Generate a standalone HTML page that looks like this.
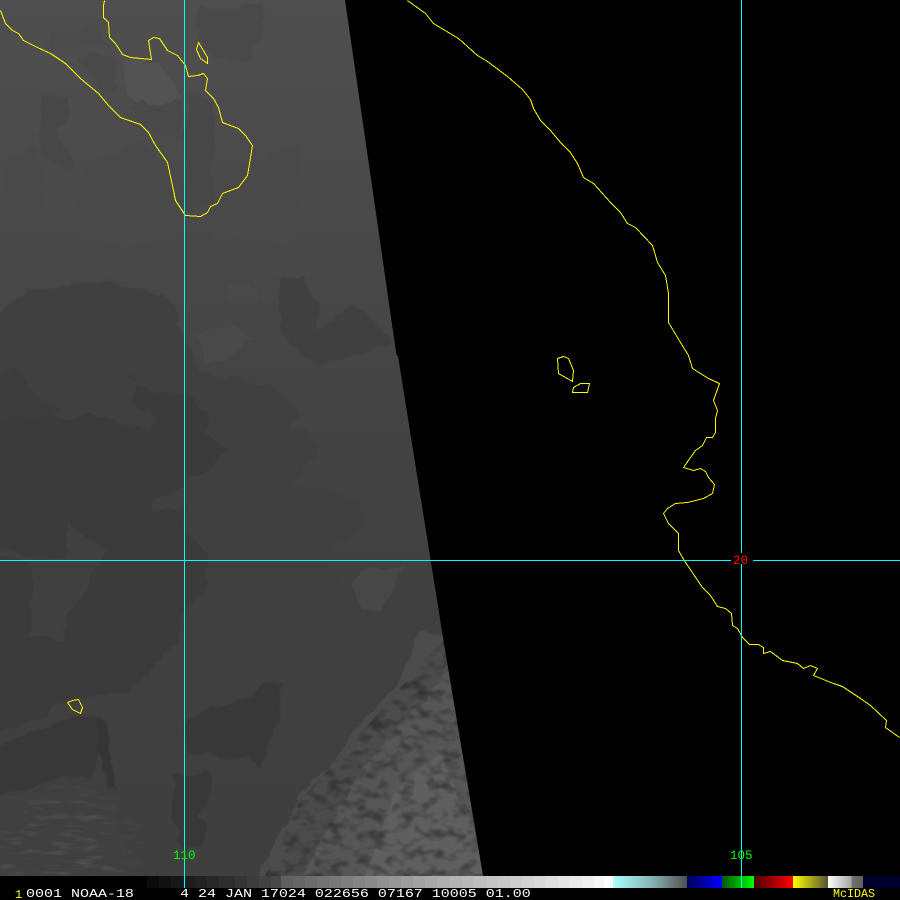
<!DOCTYPE html>
<html lang="en">
<head>
<meta charset="utf-8">
<title>McIDAS NOAA-18</title>
<style>
html,body{margin:0;padding:0;background:#000;width:900px;height:900px;overflow:hidden}
svg{display:block}
text{font-family:"Liberation Mono",monospace}
</style>
</head>
<body>
<svg width="900" height="900" viewBox="0 0 900 900" xmlns="http://www.w3.org/2000/svg">
<defs>
<linearGradient id="base" x1="0" y1="0" x2="0" y2="876" gradientUnits="userSpaceOnUse">
<stop offset="0" stop-color="#4f4f4f"/>
<stop offset=".25" stop-color="#494949"/>
<stop offset=".45" stop-color="#444444"/>
<stop offset=".72" stop-color="#404040"/>
<stop offset="1" stop-color="#3f3f3f"/>
</linearGradient>
<clipPath id="swath"><polygon points="0,0 345,0 377,220 396,352 397,356 398,356 445,650 483,876 0,876"/></clipPath>
<clipPath id="cloudclip"><polygon points="265,876 300,800 350,745 420,665 445,640 490,876"/></clipPath>
<filter id="wob" x="-5%" y="-5%" width="110%" height="110%">
<feTurbulence type="fractalNoise" baseFrequency=".035" numOctaves="3" seed="11" result="t"/>
<feDisplacementMap in="SourceGraphic" in2="t" scale="16" xChannelSelector="R" yChannelSelector="G"/>
<feGaussianBlur stdDeviation=".5"/>
</filter>
<filter id="noise" x="0" y="0" width="100%" height="100%" color-interpolation-filters="sRGB">
<feTurbulence type="fractalNoise" baseFrequency=".07 .1" numOctaves="2" seed="7"/>
<feColorMatrix values="0 0 0 0 .12  0 0 0 0 .12  0 0 0 0 .12  3 0 0 0 -1.35"/>
</filter>
<filter id="noiseL" x="0" y="0" width="100%" height="100%">
<feTurbulence type="fractalNoise" baseFrequency=".04 .2" numOctaves="2" seed="3"/>
<feColorMatrix values="0 0 0 0 1  0 0 0 0 1  0 0 0 0 1  2 0 0 0 -1"/>
</filter>
<radialGradient id="fade" gradientUnits="userSpaceOnUse" cx="60" cy="860" r="95"><stop offset=".4" stop-color="#fff"/><stop offset="1" stop-color="#000"/></radialGradient>
<mask id="fadeM" maskUnits="userSpaceOnUse" x="0" y="760" width="170" height="116"><rect x="0" y="760" width="170" height="116" fill="url(#fade)"/></mask>
<linearGradient id="cy" x1="0" x2="1" y1="0" y2="0"><stop offset="0" stop-color="#aaffff"/><stop offset=".5" stop-color="#88b8b8"/><stop offset="1" stop-color="#505050"/></linearGradient>
<linearGradient id="bl" x1="0" x2="1" y1="0" y2="0"><stop offset="0" stop-color="#00005a"/><stop offset="1" stop-color="#0000ff"/></linearGradient>
<linearGradient id="gr" x1="0" x2="1" y1="0" y2="0"><stop offset="0" stop-color="#005a00"/><stop offset="1" stop-color="#00ff00"/></linearGradient>
<linearGradient id="rd" x1="0" x2="1" y1="0" y2="0"><stop offset="0" stop-color="#4a0000"/><stop offset="1" stop-color="#ff0000"/></linearGradient>
<linearGradient id="ye" x1="0" x2="1" y1="0" y2="0"><stop offset="0" stop-color="#ffff00"/><stop offset="1" stop-color="#555533"/></linearGradient>
<linearGradient id="wh" x1="0" x2="1" y1="0" y2="0"><stop offset="0" stop-color="#ffffff"/><stop offset=".65" stop-color="#a8a8a8"/><stop offset=".7" stop-color="#707070"/><stop offset="1" stop-color="#606060"/></linearGradient>
</defs>

<rect width="900" height="900" fill="#000"/>

<g clip-path="url(#swath)">
<rect width="500" height="876" fill="url(#base)"/>

<g filter="url(#wob)">
<!-- top region (zoom coords 3x) -->
<g transform="scale(.3333)">
<path d="M600,30 L780,10 L790,120 L730,190 L640,170 L590,110Z" fill="#494949"/>
<path d="M130,290 L200,285 L205,330 L165,400 L225,480 L220,500 L130,470 L120,370Z" fill="#474747"/>
<path d="M15,480 L110,450 L130,520 L120,620 L30,600Z" fill="#494949"/>
<path d="M560,290 L640,300 L640,610 L560,620Z" fill="#474747"/>
<path d="M390,320 L500,260 L540,300 L545,410 L480,390 L430,370Z" fill="#484848"/>
<path d="M240,170 L340,170 L350,280 L290,260Z" fill="#4a4a4a"/>
<path d="M160,100 L310,70 L320,130 L150,145Z" fill="#4c4c4c"/>
<path d="M370,180 L490,180 L550,310 L440,320 L380,280Z" fill="#525252"/>
<path d="M240,520 L430,425 L520,560 L530,720 L220,720Z" fill="#494949"/>
<path d="M740,490 L900,430 L900,720 L640,720 L650,600Z" fill="#494949"/>
</g>

<!-- middle region (zoom 3x, offset y=220) -->
<g transform="translate(0,220) scale(.3333)">
<path d="M-60,330 L80,210 L200,205 L240,190 L400,190 L520,250 L553,360 L600,460 L830,500 L900,580 L860,630 L920,620 L950,710 L870,790 L1060,840 L1080,900 L990,1000 L1010,1110 L1060,1290 L-60,1290Z" fill="#414141"/>
<path d="M830,180 L910,180 L950,250 L960,320 L1060,260 L1100,290 L1180,370 L1070,390 L950,430 L890,400 L850,340Z" fill="#414141"/>
<path d="M-60,590 L100,570 L200,600 L270,570 L400,610 L450,640 L480,610 L470,590 L400,540 L400,470 L375,470 L430,510 L553,530 L620,570 L620,640 L690,680 L640,730 L553,780 L553,810 L450,850 L450,890 L553,860 L553,930 L620,1000 L625,1100 L553,1170 L530,1280 L200,1290 L190,1230 L280,1050 L330,990 L260,950 L205,910 L200,1010 L100,1010 L-60,980Z" fill="#3b3b3b"/>
<path d="M-60,480 L60,450 L110,530 L190,570 L100,600 L-60,600Z" fill="#3e3e3e"/>
<path d="M-60,1020 L90,1020 L95,1290 L-60,1290Z" fill="#3b3b3b"/>
<path d="M1040,1100 L1100,1040 L1210,1040 L1150,1170 L1090,1170Z" fill="#474747"/>
<path d="M680,190 L760,170 L770,260 L690,250Z" fill="#494949"/>
<path d="M590,340 L700,320 L760,350 L720,400 L620,440Z" fill="#484848"/>
</g>

<!-- lower region (zoom 3x, offset y=640) -->
<g transform="translate(0,640) scale(.3333)">
<path d="M-60,0 L520,0 L380,170 L300,160 L160,190 L120,230 L-60,300Z" fill="#3a3a3a"/>
<path d="M-60,330 L200,240 L280,230 L330,240 L280,400 L-60,480Z" fill="#393939"/>
<path d="M285,240 L315,240 L345,440 L325,430 L285,310Z" fill="#343434"/>
<path d="M-60,480 L300,430 L350,500 L380,720 L-60,720Z" fill="#404040"/>
<path d="M550,240 L760,170 L790,120 L845,130 L840,210 L810,300 L790,390 L740,340 L690,350 L550,340Z" fill="#383838"/>
<path d="M520,410 L620,400 L635,460 L600,530 L630,560 L600,620 L530,610 L520,530Z" fill="#383838"/>
<path d="M1260,-20 L1400,-20 L1500,740 L770,740 L840,590 L900,470 L1000,360 L1090,240 L1190,140Z" fill="#4b4b4b"/>
<path d="M1360,90 L1500,740 L890,740 L960,610 L1050,450 L1130,320 L1240,210Z" fill="#565656"/>
<path d="M1320,350 L1500,740 L1090,740 L1160,540 L1200,420Z" fill="#5f5f5f"/>
</g>
</g>

<g clip-path="url(#cloudclip)"><rect x="260" y="630" width="240" height="250" filter="url(#noise)" opacity=".5"/></g>
<g mask="url(#fadeM)"><rect x="0" y="760" width="170" height="116" filter="url(#noiseL)" opacity=".14"/></g>
</g>

<!-- coastlines -->
<g transform="translate(.5,.5)" fill="none" stroke="#ffff00" stroke-width="1" stroke-linejoin="round" shape-rendering="crispEdges">
<polyline points="0,10 5,23 12,30 18,33 23,40 37,47 50,53 65,63 80,78 98,93 108,105 120,117 140,124 148,132 155,145 167,162 173,190 175,200 185,215 200,216 207,212 210,206 217,203 222,193 238,187 247,175 252,145 245,135 238,128 222,122 218,107 213,98 205,90 207,78 203,73 197,75 188,76 185,65 177,55 167,50 159,38 153,37 148,40 151,59 130,57 122,54 115,43 109,37 108,22 103,17 103,5 104,0"/>
<polygon points="198,42 196,49 200,58 207,63 207,57"/>
<polyline points="407,0 425,13 433,23 443,29 458,38 477,55 487,61 507,76 522,89 530,99 533,108 540,120 550,130 560,142 570,152 577,163 583,177 593,183 610,202 620,212 627,223 635,227 652,245 657,262 665,275 668,293 668,322 680,342 688,355 692,368 708,378 719,383 713,400 717,410 715,418 715,432 712,437 706,437 702,445 695,450 690,457 683,467 693,470 700,468 705,471 708,477 714,484 712,493 703,498 687,502 675,503 667,508 663,513 668,523 678,533 678,550 685,562 702,587 710,595 717,606 725,608 731,613 732,625 737,628 742,637 749,644 758,644 763,647 763,653 770,651 782,660 797,663 803,668 810,665 817,668 813,675 833,683 842,686 860,698 870,705 886,720 885,727 899,737"/>
<polygon points="557,358 558,373 572,381 573,370 568,358 563,356"/>
<polygon points="572,392 587,392 589,383 580,383 573,387"/>
<polygon points="67,702 72,700 78,699 82,707 80,713 72,709"/>
</g>

<!-- colour bar -->
<g shape-rendering="crispEdges">
<rect x="147" y="876" width="12" height="12" fill="#0b0b0b"/>
<rect x="159" y="876" width="12" height="12" fill="#121212"/>
<rect x="171" y="876" width="12" height="12" fill="#181818"/>
<rect x="183" y="876" width="12" height="12" fill="#1d1d1d"/>
<rect x="195" y="876" width="12" height="12" fill="#222"/>
<rect x="207" y="876" width="12" height="12" fill="#282828"/>
<rect x="219" y="876" width="16" height="12" fill="#2e2e2e"/>
<rect x="235" y="876" width="12" height="12" fill="#353535"/>
<rect x="247" y="876" width="12" height="12" fill="#3c3c3c"/>
<rect x="259" y="876" width="12" height="12" fill="#424242"/>
<rect x="271" y="876" width="10" height="12" fill="#484848"/>
<rect x="281" y="876" width="12" height="12" fill="#606060"/>
<rect x="293" y="876" width="12" height="12" fill="#666"/>
<rect x="305" y="876" width="12" height="12" fill="#6c6c6c"/>
<rect x="317" y="876" width="12" height="12" fill="#727272"/>
<rect x="329" y="876" width="12" height="12" fill="#787878"/>
<rect x="341" y="876" width="12" height="12" fill="#7e7e7e"/>
<rect x="353" y="876" width="12" height="12" fill="#848484"/>
<rect x="365" y="876" width="12" height="12" fill="#8a8a8a"/>
<rect x="377" y="876" width="12" height="12" fill="#909090"/>
<rect x="389" y="876" width="12" height="12" fill="#969696"/>
<rect x="401" y="876" width="12" height="12" fill="#9c9c9c"/>
<rect x="413" y="876" width="12" height="12" fill="#a2a2a2"/>
<rect x="425" y="876" width="12" height="12" fill="#a8a8a8"/>
<rect x="437" y="876" width="13" height="12" fill="#aeaeae"/>
<rect x="450" y="876" width="12" height="12" fill="#b4b4b4"/>
<rect x="462" y="876" width="12" height="12" fill="#b9b9b9"/>
<rect x="474" y="876" width="12" height="12" fill="#bebebe"/>
<rect x="486" y="876" width="12" height="12" fill="#c3c3c3"/>
<rect x="498" y="876" width="12" height="12" fill="#c8c8c8"/>
<rect x="510" y="876" width="12" height="12" fill="#cdcdcd"/>
<rect x="522" y="876" width="12" height="12" fill="#d2d2d2"/>
<rect x="534" y="876" width="12" height="12" fill="#d8d8d8"/>
<rect x="546" y="876" width="12" height="12" fill="#dedede"/>
<rect x="558" y="876" width="12" height="12" fill="#e4e4e4"/>
<rect x="570" y="876" width="12" height="12" fill="#e9e9e9"/>
<rect x="582" y="876" width="12" height="12" fill="#efefef"/>
<rect x="594" y="876" width="10" height="12" fill="#f6f6f6"/>
<rect x="604" y="876" width="9" height="12" fill="#fdfdfd"/>
<rect x="613" y="876" width="74" height="12" fill="url(#cy)"/>
<rect x="687" y="876" width="35" height="12" fill="url(#bl)"/>
<rect x="722" y="876" width="32" height="12" fill="url(#gr)"/>
<rect x="754" y="876" width="39" height="12" fill="url(#rd)"/>
<rect x="793" y="876" width="35" height="12" fill="url(#ye)"/>
<rect x="828" y="876" width="35" height="12" fill="url(#wh)"/>
<rect x="863" y="876" width="37" height="12" fill="#00002e"/>

<!-- grid lines -->
<rect x="184" y="0" width="1" height="888" fill="#00ffff"/>
<rect x="741" y="0" width="1" height="553" fill="#00ffff"/>
<rect x="741" y="564" width="1" height="324" fill="#00ffff"/>
<rect x="0" y="560" width="731" height="1" fill="#00ffff"/>
<rect x="753" y="560" width="147" height="1" fill="#00ffff"/>
</g>

<!-- labels -->
<text transform="translate(173,859)" font-size="12.5" fill="#00ff00">110</text>
<text transform="translate(730,859)" font-size="12.5" fill="#00ff00">105</text>
<text transform="translate(733,564)" font-size="12.5" fill="#ff0000">20</text>
<text transform="translate(15,898)" font-size="12" fill="#ffff00">1</text>
<text transform="translate(26,897) scale(1,.82)" font-size="15" fill="#ffffff" xml:space="preserve">0001 NOAA-18</text>
<text transform="translate(180,897) scale(1,.82)" font-size="15" fill="#ffffff" xml:space="preserve">4 24 JAN 17024 022656 07167 10005 01.00</text>
<text transform="translate(833,897)" font-size="11.67" fill="#ffff00">McIDAS</text>
</svg>
</body>
</html>
